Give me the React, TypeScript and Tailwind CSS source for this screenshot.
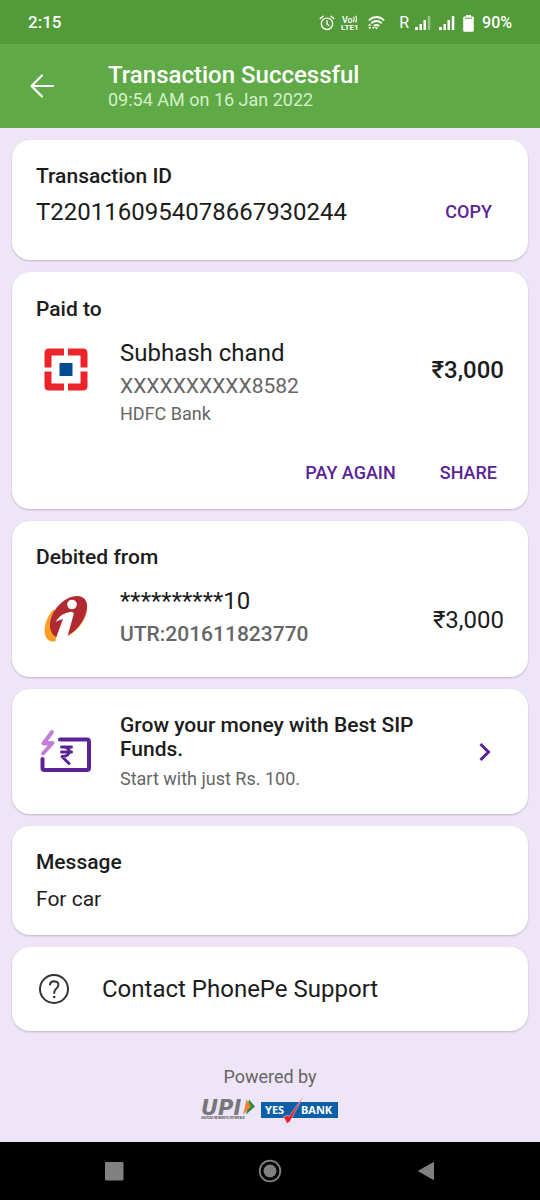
import { ReactNode } from 'react';

interface CardProps {
  className?: string;
  children: ReactNode;
}

const Card = ({ className = '', children }: CardProps) => (
  <section className={`rounded-[18px] bg-white px-6 shadow-[0_1px_2px_rgba(60,40,90,0.25)] ${className}`}>
    {children}
  </section>
);

const CardTitle = ({ children }: { children: ReactNode }) => (
  <h2 className="text-[21px] leading-6 font-medium">{children}</h2>
);

const TextButton = ({ children }: { children: ReactNode }) => (
  <button type="button" className="text-[18px] leading-6 font-medium text-[#5a2495]">
    {children}
  </button>
);

const AlarmIcon = () => (
  <svg width="16" height="16" viewBox="0 0 16 16" fill="none" stroke="currentColor" strokeWidth="1.4" strokeLinecap="round">
    <circle cx="8" cy="8.8" r="5.7" />
    <path d="M8 5.8v3.2l2 1.5M1.2 3.6 4 1.2M14.8 3.6 12 1.2" />
  </svg>
);

const VolteIcon = () => (
  <svg width="19" height="16" viewBox="0 0 19 16" fill="currentColor">
    <text x="1" y="7.5" fontFamily="Roboto, sans-serif" fontSize="9" fontWeight="500">Vo</text>
    <path d="M12.5 1.8q1.5 2.6 0 5.5M14.6.8q1.8 3.2 0 6.8" fill="none" stroke="currentColor" strokeWidth="1.1" />
    <text x="0" y="15" fontFamily="Roboto, sans-serif" fontSize="8" fontWeight="700">LTE1</text>
  </svg>
);

const WifiIcon = () => (
  <svg width="17" height="16" viewBox="0 0 17 16" fill="none" stroke="currentColor" strokeWidth="1.8">
    <path d="M.8 5.2Q8.5-1.2 16.2 5.2M3.2 8.2q5.3-4.4 10.6 0M5.8 11q2.7-2.1 5.4 0" />
    <path d="m6.8 12.2 1.7 2.3 1.7-2.3z" fill="currentColor" stroke="none" />
    <path d="m0 10.8 1.7-2.3 1.7 2.3zM.2 12l1.6 2.3L3.4 12zM4 12l1.4 2.3L6.8 12z" fill="currentColor" stroke="none" />
  </svg>
);

const SignalIcon = ({ weak = false }: { weak?: boolean }) => (
  <svg width="16" height="15" viewBox="0 0 16 15" fill="currentColor">
    <rect x="0" y="11" width="3" height="3" />
    <rect x="4.5" y="8" width="2.5" height="6" />
    <rect x="8.5" y="4" width="2.5" height="10" />
    <rect x="12.8" y="0" width="2.5" height="14" opacity={weak ? 0.4 : 1} />
  </svg>
);

const BatteryIcon = () => (
  <svg width="11" height="17" viewBox="0 0 11 17" fill="currentColor">
    <path d="M3 0h5v1.5h1.7q1.1 0 1.1 1.1v13q0 1.2-1.1 1.2H1.3Q.2 16.8.2 15.6v-13q0-1.1 1.1-1.1H3z" />
    <path d="M2 3.2h7" stroke="#539b39" strokeWidth="1" />
  </svg>
);

const HdfcLogo = () => (
  <svg width="60" height="66" viewBox="0 -3 60 66">
    <g fill="#ed232a">
      <path d="M8.5 27.5V13q0-4.5 4.5-4.5h15v7H15.5v12z" />
      <path d="M32 8.5h15q4.5 0 4.5 4.5v14.5h-7v-12H32z" />
      <path d="M8.5 31.5V46q0 4.5 4.5 4.5h15v-7H15.5v-12z" />
      <path d="M51.5 31.5V46q0 4.5-4.5 4.5H32v-7h12.5v-12z" />
    </g>
    <rect x="23.5" y="23" width="13" height="13" fill="#004c8f" />
  </svg>
);

const IciciLogo = () => (
  <svg width="60" height="64" viewBox="0 -4 60 64">
    <path d="M17 20C10 28 7 38 9.5 46c1.5 5 7 7 11.500 4.500L31 46.500C42 41 51 29 51 18z" fill="#f99d27" />
    <path d="M20 47C10 41 13 24 25 13 34 5 46 3.500 50 11c4 9-4 24-13 31-6 4.500-12 7-17 5z" fill="#b02a30" />
    <circle cx="36" cy="14.500" r="4.800" fill="#fff" />
    <path d="M19.500 32q5-9 15.500-10.300 3.200 0 2.600 2.800L31.500 46.500l-10.500 6q-2-1-1-4.500l7-19q-4 1-7.500 3z" fill="#fff" />
  </svg>
);

const SipIcon = () => (
  <svg width="60" height="60" viewBox="0 0 60 60" fill="none" strokeLinecap="round" strokeLinejoin="round">
    <path d="M24 17.5h27q2 0 2 2v26.5q0 2-2 2H8.5q-2 0-2-2V37" stroke="#5a2495" strokeWidth="4" />
    <path d="m16 10-8.5 11.5 9-.5L7 31.5" stroke="#c27fd6" strokeWidth="4" />
    <path d="M25.5 25h10M25.5 30h10M26 25q7-.5 7 4.5T26 34.5l7 7" stroke="#5a2495" strokeWidth="3" />
  </svg>
);

const HelpIcon = () => (
  <svg width="32" height="32" viewBox="0 0 32 32" fill="none" stroke="#333" strokeWidth="2">
    <circle cx="16" cy="16" r="14" />
    <path d="M12 11.5q.5-3.3 4.2-3.3 4.3.2 4.2 3.8 0 2-2.2 3.7Q16.2 17.2 16.2 20" strokeLinecap="round" />
    <circle cx="16.2" cy="24" r="1.3" fill="#333" stroke="none" />
  </svg>
);

const UpiLogo = () => (
  <svg width="56" height="30" viewBox="0 0 56 30" role="img" aria-label="UPI">
    <text x="0" y="20" fontFamily="DejaVu Sans, sans-serif" fontSize="21" fontStyle="italic" fontWeight="700" fill="#77777b">UPI</text>
    <path d="M48 4.5 54 11.5 45 19.5z" fill="#2b8a4a" />
    <path d="m45.500 4.5 4.500 7-8 8z" fill="#f08232" />
    <text x="0" y="24" fontFamily="Noto Sans, sans-serif" fontSize="3" fontStyle="italic" fontWeight="700" fill="#555">
      UNIFIED PAYMENTS INTERFACE
    </text>
  </svg>
);

const YesBankLogo = () => (
  <svg width="78" height="30" viewBox="0 0 78 30" role="img" aria-label="Yes Bank">
    <rect x="0" y="7" width="77" height="16" fill="#0a60a8" />
    <g fill="#fff" fontFamily="Noto Sans, sans-serif" fontSize="11" fontWeight="700">
      <text x="4" y="19">YES</text>
      <text x="40" y="19">BANK</text>
    </g>
    <path d="m22.5 21.5 4.5-1.5 1 1.5L42.5 1 29 26.5 26 28.500z" fill="#e02435" stroke="#f4dce5" strokeWidth=".5" />
  </svg>
);

const StatusBar = () => (
  <div className="flex h-11 items-center justify-between bg-[#539b39] px-7 pt-0.5 text-[17px] font-medium text-white">
    <span>2:15</span>
    <div className="flex items-center">
      <AlarmIcon />
      <span className="ml-1.5"><VolteIcon /></span>
      <span className="ml-2"><WifiIcon /></span>
      <span className="ml-3.5 text-[16px] font-normal">R</span>
      <span className="ml-1.5"><SignalIcon weak /></span>
      <span className="ml-2"><SignalIcon /></span>
      <span className="ml-2"><BatteryIcon /></span>
      <span className="ml-2 text-[16px]">90%</span>
    </div>
  </div>
);

const Header = () => (
  <header className="flex h-21 items-center bg-[#5faa46] pl-7 text-white">
    <button type="button" aria-label="Back" className="mr-13">
      <svg width="28" height="28" viewBox="0 0 28 28" fill="none" stroke="currentColor" strokeWidth="2.2" strokeLinecap="round" strokeLinejoin="round">
        <path d="M25 14H3.5M14 3.5 3.5 14 14 24.5" />
      </svg>
    </button>
    <div>
      <h1 className="text-[24px] leading-7 font-medium">Transaction Successful</h1>
      <p className="text-[18px] leading-[22px] text-[#d3f0c8]">09:54 AM on 16 Jan 2022</p>
    </div>
  </header>
);

const NavigationBar = () => (
  <nav className="flex h-[58px] items-center justify-between bg-black px-[104px]">
    <button type="button" aria-label="Recent apps">
      <svg width="20" height="20" viewBox="0 0 20 20"><rect x="1" y="1" width="18.5" height="18.5" rx="1" fill="#808080" /></svg>
    </button>
    <button type="button" aria-label="Home">
      <svg width="24" height="24" viewBox="0 0 24 24">
        <circle cx="12" cy="12" r="10.3" fill="none" stroke="#808080" strokeWidth="1.8" />
        <circle cx="12" cy="12" r="6.5" fill="#808080" />
      </svg>
    </button>
    <button type="button" aria-label="Back">
      <svg width="20" height="20" viewBox="0 0 20 20"><path d="M17.5 1.5v17L2.5 10z" fill="#808080" stroke="#808080" strokeLinejoin="round" /></svg>
    </button>
  </nav>
);

export default function App() {
  return (
    <div className="flex min-h-screen flex-col bg-[#eee5f6] font-['Roboto',sans-serif] text-[#1c1c1c]">
      <StatusBar />
      <Header />

      <main className="flex flex-1 flex-col gap-3 px-3 pt-3">
        <Card className="pt-6 pb-8">
          <CardTitle>Transaction ID</CardTitle>
          <div className="mt-2 flex items-center justify-between pr-3">
            <span className="text-[24px] leading-8">T2201160954078667930244</span>
            <TextButton>COPY</TextButton>
          </div>
        </Card>

        <Card className="pt-[25px] pb-6">
          <CardTitle>Paid to</CardTitle>
          <div className="mt-4 flex">
            <HdfcLogo />
            <div className="ml-6 flex-1">
              <p className="text-[24px] leading-[33px]">Subhash chand</p>
              <p className="text-[21px] leading-8 text-[#666]">XXXXXXXXXX8582</p>
              <p className="text-[18px] leading-6 text-[#666]">HDFC Bank</p>
            </div>
            <span className="mt-[17px] text-[24px] leading-8 font-medium">₹3,000</span>
          </div>
          <div className="mt-[35px] flex justify-end gap-11 pr-[7px]">
            <TextButton>PAY AGAIN</TextButton>
            <TextButton>SHARE</TextButton>
          </div>
        </Card>

        <Card className="pt-6 pb-[27px]">
          <CardTitle>Debited from</CardTitle>
          <div className="mt-4 flex items-center">
            <IciciLogo />
            <div className="ml-6 flex-1">
              <p className="text-[24px] leading-[33px]">**********10</p>
              <p className="text-[21px] leading-8 font-medium text-[#666]">UTR:201611823770</p>
            </div>
            <span className="mt-1 text-[24px] leading-8">₹3,000</span>
          </div>
        </Card>

        <Card className="pt-6 pb-[23px]">
          <a href="#sip" className="flex items-center">
            <SipIcon />
            <div className="mr-9 ml-6 flex-1">
              <p className="text-[21px] leading-6 font-medium">Grow your money with Best SIP Funds.</p>
              <p className="mt-1.5 text-[18px] leading-6 text-[#666]">Start with just Rs. 100.</p>
            </div>
            <svg className="mr-3" width="14" height="20" viewBox="0 0 14 20" fill="none" stroke="#5a2495" strokeWidth="3">
              <path d="m2.5 2 8 8-8 8" />
            </svg>
          </a>
        </Card>

        <Card className="py-6">
          <CardTitle>Message</CardTitle>
          <p className="mt-[13px] text-[21px] leading-6">For car</p>
        </Card>

        <Card>
          <a href="#support" className="flex h-21 items-center gap-8 pl-0.5">
            <HelpIcon />
            <span className="text-[24px] leading-8">Contact PhonePe Support</span>
          </a>
        </Card>

        <footer className="flex flex-col items-center pt-[22px] pb-4">
          <p className="text-[18px] leading-6 text-[#666]">Powered by</p>
          <div className="mt-1.5 flex items-center gap-1">
            <UpiLogo />
            <YesBankLogo />
          </div>
        </footer>
      </main>

      <NavigationBar />
    </div>
  );
}
